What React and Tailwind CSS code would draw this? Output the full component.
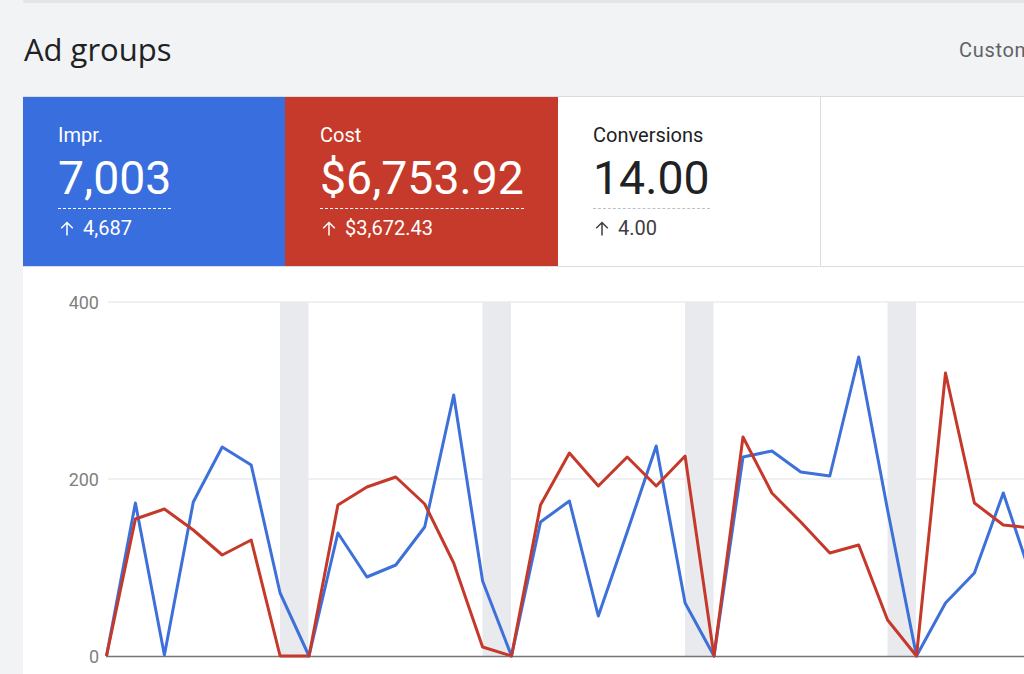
import React from "react";

const blue = [656, 503, 655, 502, 447, 465, 593, 656, 533, 577, 565, 527, 395, 581, 656, 522, 501, 616, 532, 446, 603, 656, 457, 451, 472, 476, 357, 510, 656, 603, 573, 493, 580];
const red = [656, 519, 509, 530, 555, 540, 656, 656, 505, 487, 477, 504, 563, 647, 656, 505, 453, 486, 457, 486, 456, 656, 437, 493, 522, 553, 545, 620, 656, 373, 503, 525, 528];

// chart svg starts at x=23, y=267 on the page
const toPoints = (list) =>
  list.map((y, i) => `${(83.5 + i * 28.93).toFixed(1)},${y - 267}`).join(" ");

const ArrowUp = () => (
  <svg width="16" height="17" viewBox="0 0 16 17" fill="none" stroke="currentColor" strokeWidth="1.5" className="shrink-0">
    <path d="M8 15.5V2.5M2.2 8.3L8 2.5l5.8 5.8" />
  </svg>
);

const Score = ({ label, value, delta, className, lineClass, deltaClass, labelClass }) => (
  <div className={`h-full pl-[35px] pt-[25px] shrink-0 ${className}`}>
    <div className="inline-block">
      <p className={`text-[20px] leading-[26px] ${labelClass}`}>{label}</p>
      <p className={`text-[46.4px] leading-[54px] mt-[3px] pb-[3px] border-b border-dashed ${lineClass}`}>{value}</p>
      <div className={`flex items-center gap-[8px] pl-[1px] mt-[6px] text-[20px] leading-[26px] ${deltaClass}`}>
        <span>
          <ArrowUp />
        </span>
        <span>{delta}</span>
      </div>
    </div>
  </div>
);

const App = () => {
  return (
    <div className="w-[1024px] h-[674px] overflow-hidden bg-[#f1f3f4] font-['Roboto',sans-serif]">
      <div className="h-[3px] ml-[23px] bg-[#e3e5e8]" />
      <div className="h-[93px] ml-[24px] flex items-start justify-between">
        <h1 className="mt-[25px] text-[31px] leading-[42px] text-[#202124] font-['Open_Sans',sans-serif] whitespace-nowrap">
          Ad groups
        </h1>
        <span className="mt-[34px] w-[65px] whitespace-nowrap text-[20px] leading-[26px] tracking-[0.7px] text-[#5f6368]">
          Customize
        </span>
      </div>
      <div className="ml-[23px] bg-white">
        <div className="flex h-[171px] border-y border-[#dadce0]">
          <Score
            label="Impr."
            value="7,003"
            delta="4,687"
            className="w-[262px] bg-[#396ede] text-white"
            labelClass="text-white"
            lineClass="border-white"
            deltaClass="text-white"
          />
          <Score
            label="Cost"
            value="$6,753.92"
            delta="$3,672.43"
            className="w-[273px] bg-[#c53a2a] text-white"
            labelClass="text-white"
            lineClass="border-white"
            deltaClass="text-white"
          />
          <Score
            label="Conversions"
            value="14.00"
            delta="4.00"
            className="w-[263px] bg-white border-r border-[#dadce0]"
            labelClass="text-[#202124]"
            lineClass="border-[#bdc1c6] text-[#202124]"
            deltaClass="text-[#3c4043]"
          />
        </div>
        <svg width="1001" height="407" viewBox="0 0 1001 407" className="block">
          <line x1="85" x2="1001" y1="35" y2="35" stroke="#e0e2e4" strokeWidth="1.2" />
          <line x1="85" x2="1001" y1="212" y2="212" stroke="#e0e2e4" strokeWidth="1.2" />
          <rect x="257" y="35" width="28.5" height="354" fill="#e8eaed" />
          <rect x="459.5" y="35" width="28.5" height="354" fill="#e8eaed" />
          <rect x="662" y="35" width="28.5" height="354" fill="#e8eaed" />
          <rect x="864.5" y="35" width="28.5" height="354" fill="#e8eaed" />
          <line x1="83" x2="1001" y1="389.5" y2="389.5" stroke="#757575" strokeWidth="1.5" />
          <polyline points={toPoints(blue)} fill="none" stroke="#3e70da" strokeWidth="3" strokeLinejoin="round" />
          <polyline points={toPoints(red)} fill="none" stroke="#c5392a" strokeWidth="3" strokeLinejoin="round" />
          <g fill="#7f7f7f" fontSize="18" textAnchor="end" fontFamily="Roboto, sans-serif">
            <text x="76" y="42">400</text>
            <text x="76" y="219">200</text>
            <text x="76" y="396">0</text>
          </g>
        </svg>
      </div>
    </div>
  );
};

export default App;
